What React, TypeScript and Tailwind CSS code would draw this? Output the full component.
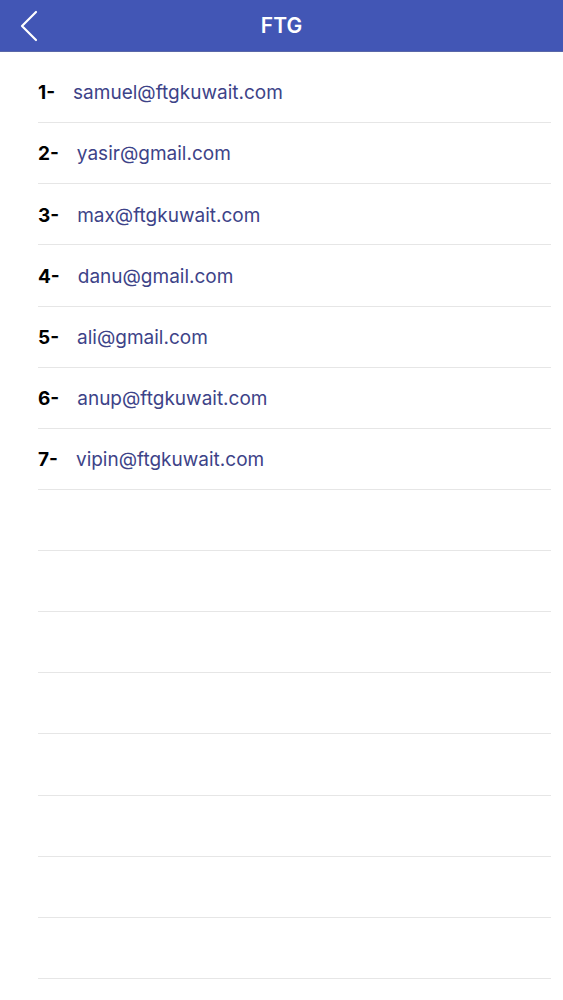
const emails = [
  'samuel@ftgkuwait.com',
  'yasir@gmail.com',
  'max@ftgkuwait.com',
  'danu@gmail.com',
  'ali@gmail.com',
  'anup@ftgkuwait.com',
  'vipin@ftgkuwait.com',
]

export default function App() {
  const rows = Array.from({ length: 15 }, (_, i) => emails[i])

  return (
    <div className="w-[563px] h-[1000px] bg-white overflow-hidden font-['Inter',Arial,sans-serif]">
      <header className="h-[52px] bg-[#4256b5] border-b border-[#5a67a8] flex items-center justify-center relative">
        <button className="absolute left-[18px] top-[10px] w-[22px] h-[32px] flex items-center justify-center">
          <svg width="20" height="32" viewBox="0 0 20 32" fill="none">
            <path d="M17 2 L3 16 L17 30" stroke="white" strokeWidth="2.2" strokeLinecap="round" strokeLinejoin="round" />
          </svg>
        </button>
        <h1 className="text-white text-[21px] font-semibold pt-[1px]">FTG</h1>
      </header>

      <ul className="pt-[10px]">
        {rows.map((email, i) => (
          <li
            key={i}
            className="h-[61.14px] ml-[38px] mr-[12px] border-b border-[#e6e6e6] flex items-center gap-[18px] pt-[3px]"
          >
            {email && (
              <>
                <span className="text-[19px] font-bold text-black">{i + 1}-</span>
                <span className="text-[19px] text-[#3d4388]">{email}</span>
              </>
            )}
          </li>
        ))}
      </ul>
    </div>
  )
}
